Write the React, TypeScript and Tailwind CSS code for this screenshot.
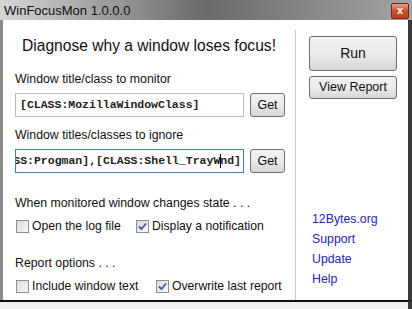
import { useState } from 'react'

const sans = { fontFamily: '"Liberation Sans", Arial, sans-serif' }
const mono = { fontFamily: '"Liberation Mono", "Courier New", monospace' }

function Check({ checked, label, onToggle }: { checked: boolean; label: string; onToggle: () => void }) {
  return (
    <label className="flex items-center gap-[3px] cursor-default whitespace-nowrap" onClick={onToggle}>
      <span className="w-[13px] h-[13px] border border-[#8f8f8f] bg-gradient-to-br from-[#dcdcdc] to-[#f6f6f6] flex items-center justify-center">
        {checked && (
          <svg width="9" height="9" viewBox="0 0 9 9">
            <path d="M1 4.5 L3.5 7 L8 1.5" stroke="#3a57b0" strokeWidth="1.8" fill="none" />
          </svg>
        )}
      </span>
      <span className="text-[12.2px] text-[#111] leading-none">{label}</span>
    </label>
  )
}

function WinButton({ children, className = '' }: { children: React.ReactNode; className?: string }) {
  return (
    <button
      className={`border border-[#707070] rounded-[3px] bg-gradient-to-b from-[#f2f2f2] via-[#ebebeb] to-[#d6d6d6] text-[12.5px] text-[#111] ${className}`}
    >
      {children}
    </button>
  )
}

export default function App() {
  const [openLog, setOpenLog] = useState(false)
  const [notify, setNotify] = useState(true)
  const [winText, setWinText] = useState(false)
  const [overwrite, setOverwrite] = useState(true)

  return (
    <div className="w-[412px] h-[309px] overflow-hidden bg-white flex flex-col" style={sans}>
      {/* title bar */}
      <div className="h-[20px] shrink-0 flex items-center justify-between bg-gradient-to-r from-[#d6d6d6] via-[#6a6a6a] to-[#a4a4a4] pl-[4px] pr-[3px]">
        <span className="text-[13px] text-[#111] leading-none">WinFocusMon 1.0.0.0</span>
        <div className="w-[18px] h-[16px] mt-[1px] rounded-[2px] border border-[#6b2a1a] bg-gradient-to-b from-[#e8a088] via-[#c8502e] to-[#c04020] flex items-center justify-center">
          <span className="text-white text-[11px] font-bold leading-none">x</span>
        </div>
      </div>

      <div className="h-[280px] shrink-0 flex border-l-[3px] border-l-[#8a8a8a] border-r-[4px] border-r-[#3a3a3a]">
        {/* left panel */}
        <div className="w-[292px] shrink-0 pl-[12px] pt-[16px]">
          <div className="text-[15.6px] text-[#111] leading-[20px] pl-[7px] whitespace-nowrap">Diagnose why a window loses focus!</div>

          <div className="mt-[15px] text-[12.3px] text-[#111] leading-[16px]">Window title/class to monitor</div>
          <div className="mt-[6px] flex gap-[6px]">
            <div className="w-[229px] h-[24px] border border-[#bdbdbd] flex items-center px-[4px] overflow-hidden whitespace-nowrap">
              <span className="text-[11.5px] font-bold text-[#222]" style={mono}>
                [CLASS:MozillaWindowClass]
              </span>
            </div>
            <WinButton className="w-[35px] h-[24px]">Get</WinButton>
          </div>

          <div className="mt-[10px] text-[12.3px] text-[#111] leading-[16px]">Window titles/classes to ignore</div>
          <div className="mt-[6px] flex gap-[6px]">
            <div className="w-[229px] h-[24px] border border-[#3c7fb1] flex items-center justify-end pr-[2px] overflow-hidden whitespace-nowrap">
              <span className="text-[11.5px] font-bold text-[#222]" style={mono}>
                [CLASS:Progman],[CLASS:Shell_TrayW
                <span className="inline-block w-[1px] h-[14px] -mr-[1px] bg-black align-middle" />
                nd]
              </span>
            </div>
            <WinButton className="w-[35px] h-[24px]">Get</WinButton>
          </div>

          <div className="mt-[22px] text-[12.3px] text-[#111] leading-[16px]">When monitored window changes state . . .</div>
          <div className="mt-[8px] h-[15px] flex items-center pl-[1px]">
            <div className="w-[120px]">
              <Check checked={openLog} label="Open the log file" onToggle={() => setOpenLog(!openLog)} />
            </div>
            <Check checked={notify} label="Display a notification" onToggle={() => setNotify(!notify)} />
          </div>

          <div className="mt-[21px] text-[12.3px] text-[#111] leading-[16px]">Report options . . .</div>
          <div className="mt-[8px] h-[15px] flex items-center pl-[1px]">
            <div className="w-[140px]">
              <Check checked={winText} label="Include window text" onToggle={() => setWinText(!winText)} />
            </div>
            <Check checked={overwrite} label="Overwrite last report" onToggle={() => setOverwrite(!overwrite)} />
          </div>
        </div>

        {/* divider */}
        <div className="w-[1px] bg-[#c8c8c8] mt-[10px]" />

        {/* right panel */}
        <div className="flex-1 pl-[13px] pt-[16px] flex flex-col">
          <WinButton className="w-[88px] h-[35px] text-[14px]">Run</WinButton>
          <WinButton className="w-[88px] h-[23px] mt-[5px]">View Report</WinButton>
          <div className="mt-[110px] pl-[3px] flex flex-col text-[12.3px] text-[#2424b8] leading-[20px]">
            <a>12Bytes.org</a>
            <a>Support</a>
            <a>Update</a>
            <a>Help</a>
          </div>
        </div>
      </div>

      {/* bottom frame */}
      <div className="h-[9px] shrink-0 border-t-[2px] border-t-[#111] bg-[#f0f0f0] border-r-[4px] border-r-[#3a3a3a]" />
    </div>
  )
}
